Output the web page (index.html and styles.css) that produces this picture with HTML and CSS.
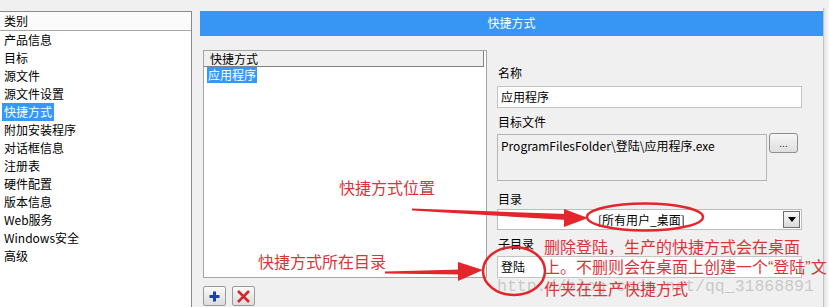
FILE: index.html
```html
<!DOCTYPE html>
<html lang="zh-CN">
<head>
  <meta charset="UTF-8">
  <title>快捷方式</title>
  <link rel="stylesheet" href="styles.css">
</head>
<body>

  <div class="window">
    <aside class="categories">
      <div class="cat-head">类别</div>
      <ul class="cat-list">
        <li><span>产品信息</span></li>
        <li><span>目标</span></li>
        <li><span>源文件</span></li>
        <li><span>源文件设置</span></li>
        <li class="selected"><span>快捷方式</span></li>
        <li><span>附加安装程序</span></li>
        <li><span>对话框信息</span></li>
        <li><span>注册表</span></li>
        <li><span>硬件配置</span></li>
        <li><span>版本信息</span></li>
        <li><span>Web服务</span></li>
        <li><span>Windows安全</span></li>
        <li><span>高级</span></li>
      </ul>
    </aside>

    <main class="panel">
      <div class="panel-title">快捷方式</div>
      <div class="panel-body">
        <div class="list-col">
          <div class="shortcut-list">
            <div class="list-head">快捷方式</div>
            <div class="list-item selected"><span>应用程序</span></div>
          </div>
          <div class="list-tools">
            <button class="tool">
              <svg width="13" height="13" viewBox="0 0 13 13"><path d="M6.5 1.5v10M1.5 6.5h10" stroke="#1a3fb0" stroke-width="3"/></svg>
            </button>
            <button class="tool">
              <svg width="15" height="15" viewBox="0 0 15 15"><path d="M2 2l11 11M13 2L2 13" stroke="#d2282e" stroke-width="2.6"/></svg>
            </button>
          </div>
        </div>

        <div class="form-col">
          <div class="field-label">名称</div>
          <div class="text-box name-box">应用程序</div>

          <div class="field-label target-label">目标文件</div>
          <div class="target-row">
            <div class="text-box target-box">ProgramFilesFolder\登陆\应用程序.exe</div>
            <button class="browse">...</button>
          </div>

          <div class="field-label dir-label">目录</div>
          <div class="combo">
            <span class="combo-text">[所有用户_桌面]</span>
            <span class="combo-btn">
              <svg width="8" height="5" viewBox="0 0 8 5"><path d="M0 0h8L4 5z" fill="#000"/></svg>
            </span>
          </div>

          <div class="field-label sub-label">子目录</div>
          <div class="text-box sub-box">登陆</div>
        </div>
      </div>
    </main>

    <div class="edge"></div>
  </div>

  <!-- annotations drawn over the screenshot -->
  <div class="notes">
    <div class="watermark">http://blog.csdn.net/qq_31868891</div>
    <svg class="marks" width="829" height="307" viewBox="0 0 829 307">
      <polygon points="412,208.5 567,214 567,220 412,210.5" fill="#e3262b"/>
      <polygon points="564,209 588,218 564,227" fill="#e3262b"/>
      <ellipse cx="645" cy="217" rx="58" ry="13.5" fill="none" stroke="#e3262b" stroke-width="2.5"/>
      <polygon points="385,271.5 461,269.5 461,274.5 385,273.5" fill="#e3262b"/>
      <polygon points="458,262 483,270 458,281" fill="#e3262b"/>
      <ellipse cx="514" cy="271" rx="31" ry="24" fill="none" stroke="#e3262b" stroke-width="2.5"/>
    </svg>
    <div class="note note-pos">快捷方式位置</div>
    <div class="note note-dir">快捷方式所在目录</div>
    <div class="note note-tip">删除登陆，生产的快捷方式会在桌面<br>上。不删则会在桌面上创建一个<span class="quote">“</span>登陆<span class="quote">”</span>文<br>件夹在生产快捷方式</div>
  </div>

</body>
</html>
```

FILE: styles.css
```css
body {
  margin: 0;
  width: 829px;
  height: 307px;
  overflow: hidden;
  position: relative;
  background: #f0f0f0;
  font-family: "Noto Sans CJK SC", sans-serif;
  font-size: 12px;
  color: #000;
}
.window {
  display: flex;
  height: 307px;
}

/* left category list */
.categories {
  margin-top: 11px;
  width: 192px;
  box-sizing: border-box;
  background: #fff;
  border-top: 1px solid #8a8a8a;
  border-right: 1px solid #8a8a8a;
}
.cat-head {
  height: 18px;
  line-height: 18px;
  padding-left: 4px;
  background: #fbfbfb;
  border-bottom: 1px solid #a8a8a8;
}
.cat-list {
  list-style: none;
  margin: 0;
  padding: 0;
}
.cat-list li {
  height: 18px;
  line-height: 18px;
  padding-left: 2px;
}
.cat-list li span {
  padding: 0 2px;
  display: inline-block;
}
.cat-list li.selected span {
  background: #3399ff;
  color: #fff;
}

/* right panel */
.panel {
  margin-top: 11px;
  margin-left: 8px;
  width: 623px;
}
.panel-title {
  height: 25px;
  line-height: 24px;
  text-align: center;
  background: #3795f4;
  color: #fff;
}
.panel-body {
  display: flex;
  padding: 14px 0 0 3px;
}
.list-col {
  width: 284px;
}
.shortcut-list {
  height: 228px;
  box-sizing: border-box;
  background: #fff;
  border: 1px solid #a4a4a4;
}
.list-head {
  height: 15px;
  line-height: 15px;
  padding-left: 6px;
  margin-right: 2px;
  background: #f0f0f0;
  border-bottom: 1px solid #828282;
  border-right: 1px solid #828282;
}
.list-item {
  height: 16px;
  line-height: 16px;
  padding-left: 3px;
}
.list-item span {
  display: inline-block;
  padding: 0 1px;
}
.list-item.selected span {
  background: #3399ff;
  color: #fff;
}
.list-tools {
  display: flex;
  gap: 6px;
  margin-top: 8px;
}
.tool {
  width: 23px;
  height: 20px;
  padding: 0;
  display: flex;
  align-items: center;
  justify-content: center;
  border: 1px solid #9a9a9a;
  border-radius: 2px;
  background: linear-gradient(#fafafa, #dcdcdc);
}

/* form */
.form-col {
  margin-left: 10px;
  width: 305px;
  padding-top: 14px;
}
.field-label {
  height: 18px;
  line-height: 18px;
  padding-left: 1px;
}
.target-label {
  margin-top: 5px;
}
.dir-label {
  margin-top: 9px;
}
.sub-label {
  margin-top: 5px;
}
.text-box {
  box-sizing: border-box;
  background: #fff;
  border: 1px solid #c4c4c4;
  padding: 0 3px;
}
.name-box {
  margin-top: 4px;
  height: 22px;
  line-height: 20px;
}
.target-row {
  display: flex;
  align-items: flex-start;
  gap: 2px;
  margin-top: 3px;
}
.target-box {
  width: 270px;
  height: 47px;
  line-height: 22px;
  background: #f0f0f0;
  border-color: #b4b4b4;
}
.browse {
  margin-top: -1px;
  width: 29px;
  height: 20px;
  padding: 0;
  font-family: "Noto Sans CJK SC", sans-serif;
  font-size: 10px;
  line-height: 10px;
  color: #333;
  border: 1px solid #8e8e8e;
  border-radius: 3px;
  background: linear-gradient(#f6f6f6, #dedede);
}
.combo {
  margin-top: 1px;
  height: 21px;
  box-sizing: border-box;
  display: flex;
  align-items: center;
  background: #fff;
  border: 1px solid #bcbcbc;
}
.combo-text {
  flex: 1;
  padding-left: 100px;
  line-height: 19px;
}
.combo-btn {
  width: 15px;
  height: 15px;
  margin-right: 1px;
  display: flex;
  align-items: center;
  justify-content: center;
  border: 1px solid #6e6e6e;
  background: linear-gradient(#f8f8f8, #dadada);
}
.sub-box {
  margin-top: 3px;
  height: 22px;
  line-height: 20px;
}

/* right window edge */
.edge {
  flex: 1;
  margin-top: 8px;
  border-left: 1px solid #c2c2c2;
  background: linear-gradient(to right, #e2e2e2, #fdfdfd);
}

/* red annotations on top */
.notes {
  position: absolute;
  top: 0;
  left: 0;
  width: 829px;
  height: 307px;
  pointer-events: none;
}
.marks {
  position: absolute;
  top: 0;
  left: 0;
}
.watermark {
  position: absolute;
  left: 497px;
  top: 277px;
  line-height: 20px;
  font-family: "Liberation Mono", monospace;
  font-size: 16.5px;
  color: rgba(150, 150, 150, 0.45);
  white-space: nowrap;
}
.note {
  position: absolute;
  font-size: 16px;
  line-height: 20px;
  color: #d8353b;
  white-space: nowrap;
}
.note .quote {
  font-family: "Liberation Sans", sans-serif;
}
.note-pos {
  left: 339px;
  top: 177px;
}
.note-dir {
  left: 258px;
  top: 251px;
}
.note-tip {
  left: 544px;
  top: 236px;
}
```
